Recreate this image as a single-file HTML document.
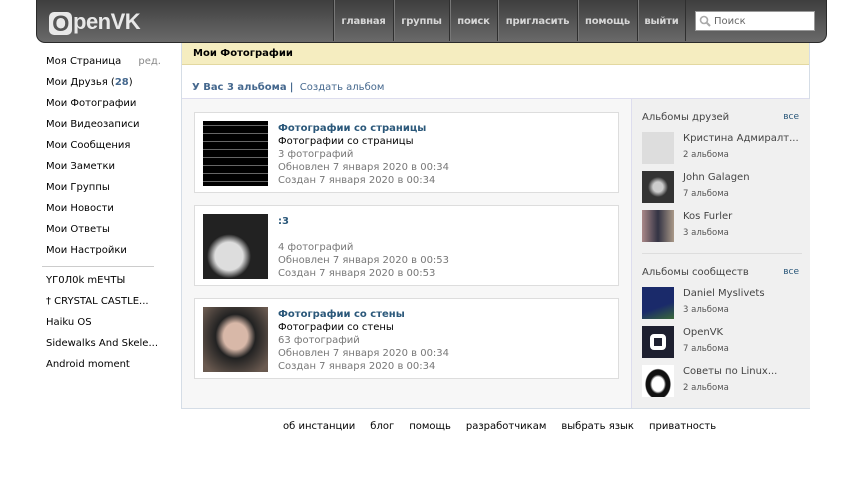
<!DOCTYPE html>
<html><head><meta charset="utf-8"><style>
*{margin:0;padding:0;box-sizing:border-box}
body{width:862px;height:490px;background:#fff;font-family:"DejaVu Sans","Liberation Sans",sans-serif;font-size:10px;color:#000;position:relative;overflow:hidden}
.hdr{position:absolute;left:36px;top:0;width:791px;height:43px;background:linear-gradient(#3e3e3e,#6a6a6a);border-radius:0 0 9px 9px;border:1px solid #2a2a2a;border-top:none}
.logo{position:absolute;left:12px;top:9px;color:#e8e8e8;font:bold 22px "Liberation Sans",sans-serif;letter-spacing:-0.5px}
.logo b{display:inline-block;background:#e8e8e8;color:#555;border-radius:5px;width:23px;height:23px;text-align:center;line-height:23px;margin-right:1px;vertical-align:-2px}
.nav{position:absolute;left:296px;top:0;height:41px;display:flex}
.nav a{color:#d6d6d6;font-weight:bold;font-size:10px;text-align:center;line-height:44px;border-left:1px solid #2f2f2f;box-shadow:inset 1px 0 #777;text-decoration:none;white-space:nowrap;letter-spacing:-0.2px}
.nav a:last-child{border-right:1px solid #2f2f2f}
.srch{position:absolute;left:658px;top:11px;width:120px;height:20px;background:#fff;border:1px solid #999;color:#666;font-size:10px;line-height:19px;padding-left:18px}
.srch svg{position:absolute;left:3px;top:3px}
.menu{position:absolute;left:46px;top:55px}
.menu div{height:21px;line-height:13px;color:#000;white-space:nowrap}
.menu .sep{height:1px;background:#ccc;width:112px;margin:1px 0 7px -4px}
.panel{position:absolute;left:181px;top:43px;width:629px;height:366px;border:1px solid #d5dde6;border-top:none;background:#f7f7f7}
.ph{height:22px;background:#f5edc0;border-bottom:1px solid #e3d8a0;font-weight:bold;padding:5px 11px 0}
.tabs{height:34px;background:#fff;border-bottom:1px solid #dde;padding:17px 10px 0;color:#45688e}
.tabs b{color:#45688e}
.right{position:absolute;left:449px;top:56px;width:179px;height:309px;background:#f0f0f0;border-left:1px solid #dde}
.card{position:absolute;left:12px;width:425px;height:81px;background:#fff;border:1px solid #ddd}
.th{position:absolute;left:8px;top:8px;width:65px;height:65px}
.ct{position:absolute;left:83px;top:9px;line-height:13px;color:#777}
.ct .t{color:#2b587a;font-weight:bold}
.ct .d{color:#000}
.sec{position:absolute;left:10px;color:#444}
.all{position:absolute;right:11px;color:#2b587a;font-size:9px}
.it{position:absolute;left:10px;width:165px;height:32px}
.it i{position:absolute;left:0;top:0;width:32px;height:32px}
.it .n{position:absolute;left:41px;top:1px;color:#444;white-space:nowrap}
.it .s{position:absolute;left:41px;top:18px;color:#555;font-size:8.5px}
.foot{position:absolute;top:421px;left:283px;color:#000;white-space:nowrap}
.foot span{margin-right:15px}
</style></head><body>
<div class="hdr">
<div class="logo"><b>O</b>penVK</div>
<div class="nav"><a style="width:60px">главная</a><a style="width:56px">группы</a><a style="width:48px">поиск</a><a style="width:80px">пригласить</a><a style="width:60px">помощь</a><a style="width:49px">выйти</a></div>
<div class="srch"><svg width="13" height="13" viewBox="0 0 13 13"><circle cx="5" cy="5" r="3.5" fill="none" stroke="#aaa" stroke-width="1.6"/><path d="M7.5 7.5L11 11" stroke="#aaa" stroke-width="2"/></svg>Поиск</div>
</div>
<div class="menu">
<div>Моя Страница <span style="color:#888;margin-left:14px">ред.</span></div>
<div>Мои Друзья (<b style="color:#45688e">28</b>)</div>
<div>Мои Фотографии</div><div>Мои Видеозаписи</div><div>Мои Сообщения</div><div>Мои Заметки</div><div>Мои Группы</div><div>Мои Новости</div><div>Мои Ответы</div><div>Мои Настройки</div>
<div class="sep"></div>
<div>YГ0Л0k mЕЧТЫ</div><div>† CRYSTAL CASTLE...</div><div>Haiku OS</div><div>Sidewalks And Skele...</div><div>Android moment</div>
</div>
<div class="panel">
<div class="ph">Мои Фотографии</div>
<div class="tabs"><b>У Вас 3 альбома</b> <b style="color:#45688e">|</b>&nbsp; Создать альбом</div>
<div class="card" style="top:69px"><div class="th" style="background:repeating-linear-gradient(#000 0 4px,#666 4px 5px,#000 5px 8px)"></div><div class="ct"><div class="t">Фотографии со страницы</div><div class="d">Фотографии со страницы</div>3 фотографий<br>Обновлен 7 января 2020 в 00:34<br>Создан 7 января 2020 в 00:34</div></div>
<div class="card" style="top:162px"><div class="th" style="background:radial-gradient(circle at 40% 65%,#ddd 0 14px,#222 22px)"></div><div class="ct"><div class="t">:3</div><div>&nbsp;</div>4 фотографий<br>Обновлен 7 января 2020 в 00:53<br>Создан 7 января 2020 в 00:53</div></div>
<div class="card" style="top:255px"><div class="th" style="background:radial-gradient(ellipse at 50% 45%,#d8b8a8 0 12px,#222 20px,#6a5a50 40px)"></div><div class="ct"><div class="t">Фотографии со стены</div><div class="d">Фотографии со стены</div>63 фотографий<br>Обновлен 7 января 2020 в 00:34<br>Создан 7 января 2020 в 00:34</div></div>
<div class="right">
<div class="sec" style="top:13px">Альбомы друзей</div><div class="all" style="top:13px">все</div>
<div class="it" style="top:33px"><i style="background:#ddd"></i><span class="n">Кристина Адмиралт...</span><span class="s">2 альбома</span></div>
<div class="it" style="top:72px"><i style="background:radial-gradient(#ccc 0 5px,#333 10px)"></i><span class="n">John Galagen</span><span class="s">7 альбома</span></div>
<div class="it" style="top:111px"><i style="background:linear-gradient(90deg,#a88 ,#334 50%,#a98)"></i><span class="n">Kos Furler</span><span class="s">3 альбома</span></div>
<div style="position:absolute;left:10px;top:154px;width:160px;height:1px;background:#ddd"></div>
<div class="sec" style="top:168px">Альбомы сообществ</div><div class="all" style="top:168px">все</div>
<div class="it" style="top:188px"><i style="background:linear-gradient(160deg,#1a2a6a 60%,#3a6a3a)"></i><span class="n">Daniel Myslivets</span><span class="s">3 альбома</span></div>
<div class="it" style="top:227px"><i style="background:#1e2030"><b style="position:absolute;left:8px;top:8px;width:16px;height:16px;border:4px solid #fff;border-radius:4px"></b></i><span class="n">OpenVK</span><span class="s">7 альбома</span></div>
<div class="it" style="top:266px"><i style="background:radial-gradient(ellipse at 50% 60%,#fff 0 6px,#111 8px 12px,#fff 13px)"></i><span class="n">Советы по Linux...</span><span class="s">2 альбома</span></div>
</div>
</div>
<div class="foot"><span>об инстанции</span><span>блог</span><span>помощь</span><span>разработчикам</span><span>выбрать язык</span><span>приватность</span></div>
</body></html>
